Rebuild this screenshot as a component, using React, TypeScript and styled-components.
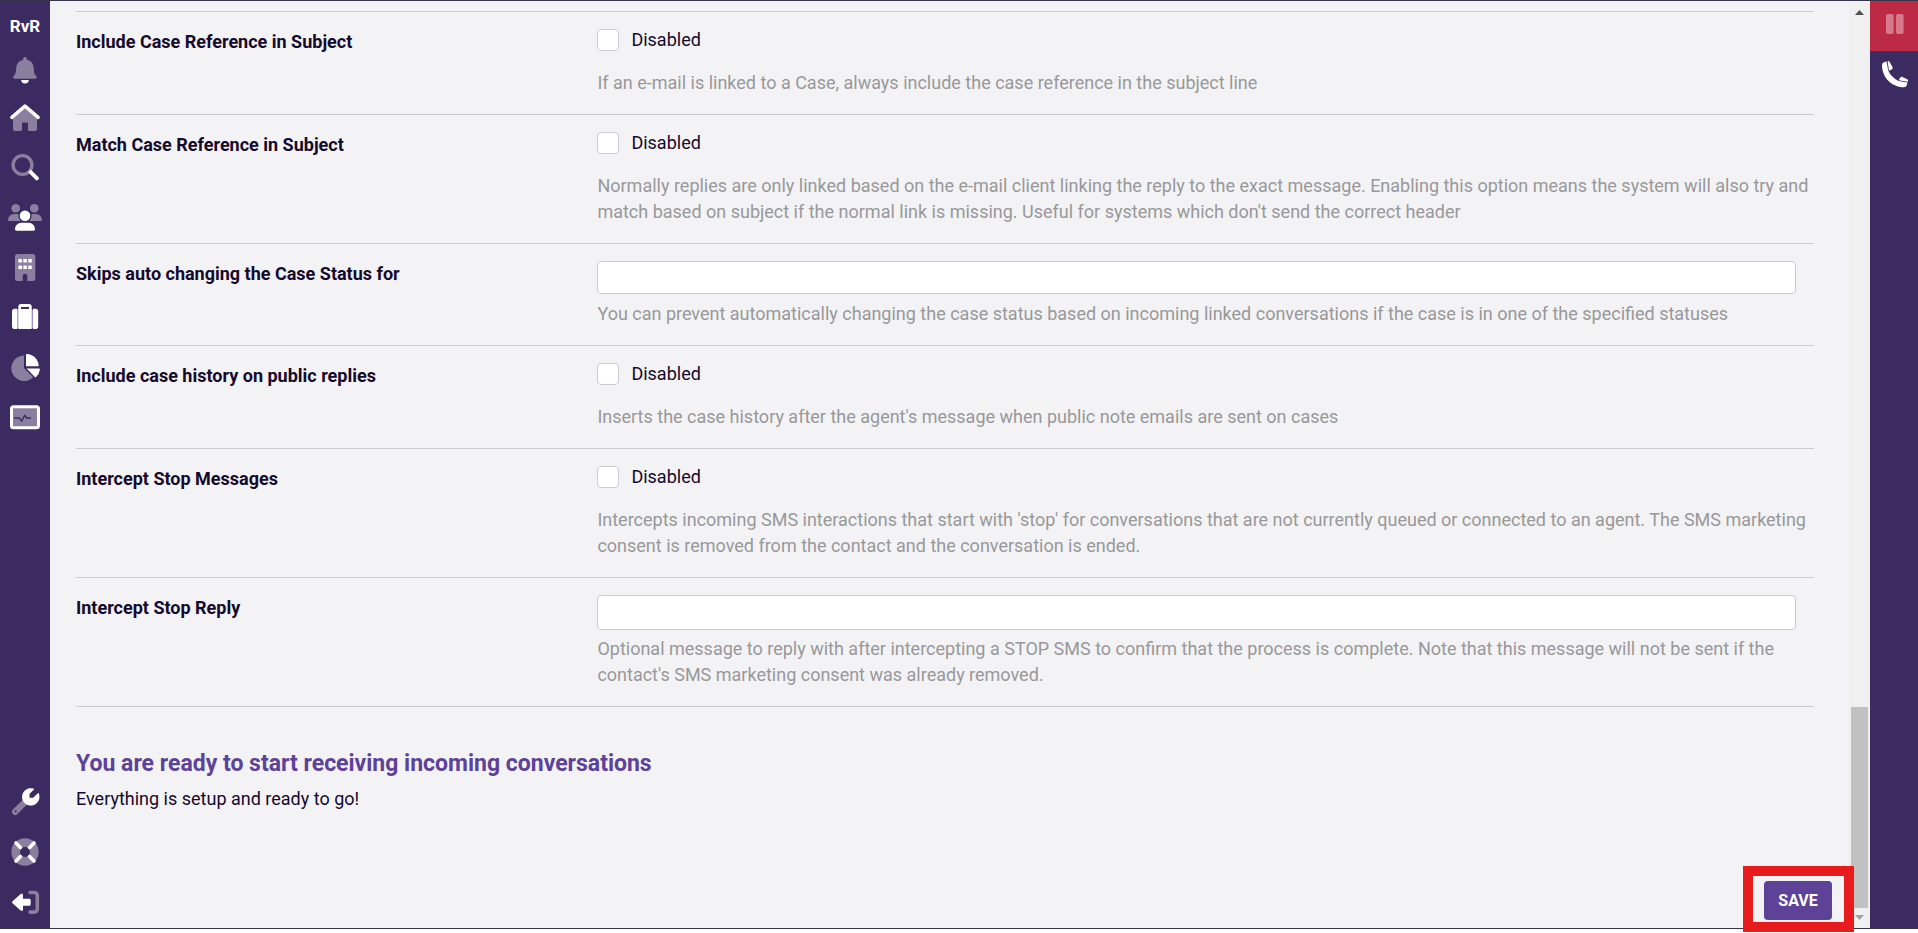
import React from "react";
import styled, { createGlobalStyle } from "styled-components";

const color = {
  nav: "#3b2b60",
  navMuted: "#8b7f9f",
  page: "#f3f3f5",
  line: "#cbccd0",
  ink: "#160a2c",
  hint: "#98989a",
  accent: "#5d4298",
  frame: "#36344a",
  danger: "#bc2a45",
  highlight: "#e81c1c",
};

const GlobalStyle = createGlobalStyle`
  *, *::before, *::after { box-sizing: border-box; }
  body {
    margin: 0;
    background: #ffffff;
    color: ${color.ink};
    font-family: Roboto, "Liberation Sans", sans-serif;
    font-size: 18px;
    line-height: 26px;
  }
`;

const Page = styled.div`
  position: relative;
  min-height: 100vh;
  padding-bottom: 4px;
  display: flex;
`;

const Frame = styled.div`
  flex: 1;
  min-width: 0;
  display: flex;
  border-top: 1px solid ${color.frame};
  border-bottom: 1px solid ${color.frame};
`;

const Sidebar = styled.nav`
  flex: 0 0 50px;
  display: flex;
  flex-direction: column;
  padding-bottom: 1px;
  background: ${color.nav};
`;

const Brand = styled.a`
  display: flex;
  align-items: center;
  justify-content: center;
  height: 45px;
  padding-top: 4px;
  color: #ffffff;
  font-size: 17px;
  font-weight: 700;
  text-decoration: none;
`;

const IconButton = styled.button<{ $short?: boolean; $alert?: boolean }>`
  display: flex;
  align-items: center;
  justify-content: center;
  width: 100%;
  height: ${(p) => (p.$short ? 46 : 50)}px;
  padding: 0;
  border: 0;
  background: ${(p) => (p.$alert ? color.danger : "transparent")};
  cursor: pointer;
`;

const Spacer = styled.div`
  flex: 1;
`;

const Main = styled.main`
  flex: 1;
  min-width: 0;
  padding: 10px 35px 64px 26px;
  background: ${color.page};
`;

const Row = styled.div`
  display: grid;
  grid-template-columns: 30% 70%;
  padding: 17px 0 18px;
  border-top: 1px solid ${color.line};
`;

const RowLabel = styled.label`
  font-weight: 700;
`;

const Field = styled.div`
  min-width: 0;
`;

const CheckLabel = styled.label`
  display: flex;
  align-items: center;
  gap: 12px;
  height: 22px;
  margin-bottom: 19px;
`;

const Checkbox = styled.input`
  appearance: none;
  width: 22px;
  height: 22px;
  margin: 0;
  border: 1px solid ${color.line};
  border-radius: 4px;
  background: #ffffff;
  &:checked {
    background: ${color.accent};
  }
`;

const InputWrap = styled.div`
  padding-right: 18px;
`;

const TextInput = styled.input<{ $compact?: boolean }>`
  display: block;
  width: 100%;
  height: ${(p) => (p.$compact ? 33 : 35)}px;
  margin: 0 0 ${(p) => (p.$compact ? 7 : 6)}px;
  padding: 0 10px;
  border: 1px solid ${color.line};
  border-radius: 4px;
  background: #ffffff;
  font: inherit;
`;

const Hint = styled.p`
  margin: 0;
  color: ${color.hint};
`;

const Closing = styled.section`
  border-top: 1px solid ${color.line};
  padding-top: 41px;
`;

const ClosingTitle = styled.h2`
  margin: 0 0 6px;
  color: ${color.accent};
  font-size: 23px;
  line-height: 32px;
  font-weight: 700;
`;

const ClosingText = styled.p`
  margin: 0;
`;

const Scrollbar = styled.div`
  flex: 0 0 21px;
  display: flex;
  flex-direction: column;
  align-items: center;
  background: #f0f0f0;
`;

const ScrollArrow = styled.svg`
  width: 17px;
  height: 20px;
`;

const ScrollThumb = styled.div`
  width: 17px;
  height: 201px;
  background: #c1c1c1;
`;

const CallPanel = styled.aside`
  flex: 0 0 48px;
  background: ${color.nav};
`;

const SaveHighlight = styled.div`
  position: absolute;
  right: 64px;
  bottom: 1px;
  padding: 5px 12px 2px 11px;
  border: 10px solid ${color.highlight};
  background: ${color.page};
`;

const SaveButton = styled.button`
  display: block;
  width: 68px;
  height: 39px;
  padding: 0;
  border: 0;
  border-radius: 4px;
  background: ${color.accent};
  color: #ffffff;
  font: 700 16px/39px Roboto, "Liberation Sans", sans-serif;
  cursor: pointer;
`;

const M = color.navMuted;
const W = "#ffffff";

const icons: Record<string, React.ReactNode> = {
  bell: (
    <g transform="translate(0 1)">
      <path fill={M} d="M17 4c1 0 1.8.8 1.8 1.8v1c4.5.9 7 4.3 7 9 0 4.5 1.2 5.7 2.6 7.4.9 1.1.2 2.6-1.3 2.6H6.9c-1.5 0-2.2-1.5-1.3-2.6 1.4-1.7 2.6-2.9 2.6-7.4 0-4.7 2.5-8.1 7-9v-1c0-1 .8-1.8 1.8-1.8z" />
      <path fill={W} d="M13.2 27h7.6a3.8 3.4 0 0 1-7.6 0z" />
    </g>
  ),
  home: (
    <>
      <path fill={M} d="M17 8.5l12 10.3V29a2 2 0 0 1-2 2h-5.5a1.5 1.5 0 0 1-1.5-1.5V23.500a1 1 0 0 0-1-1h-4a1 1 0 0 0-1 1v6a1.500 1.500 0 0 1-1.500 1.500H7a2 2 0 0 1-2-2V18.800z" />
      <path fill="none" stroke={W} strokeWidth="3.6" strokeLinecap="round" strokeLinejoin="round" d="M3.900 17.300L17 6.200l13.100 11.100" />
    </>
  ),
  search: (
    <>
      <circle cx="14.500" cy="15" r="9.400" fill="none" stroke={M} strokeWidth="3.400" />
      <path d="M21 21.300l2-1.600 7.300 7.400a1.900 1.900 0 0 1-2.700 2.700l-7-7z" fill={W} />
    </>
  ),
  users: (
    <>
      <g fill={M}>
        <circle cx="7.700" cy="8.300" r="4.300" />
        <circle cx="26.300" cy="8.300" r="4.300" />
        <path d="M0 20a6 6 0 0 1 6-6h3.500q1.500 0 2 .6-1.200 3.600 1.800 6.400H1a1 1 0 0 1-1-1z" />
        <path d="M34 20a6 6 0 0 0-6-6h-3.500q-1.500 0-2 .6 1.200 3.600-1.800 6.400H33a1 1 0 0 0 1-1z" />
      </g>
      <circle cx="17" cy="15.700" r="6" fill={W} stroke={color.nav} strokeWidth="1.400" />
      <path fill={W} d="M7 29.300c0-3.800 2.800-6.600 6.600-6.600h6.800c3.800 0 6.600 2.800 6.600 6.600 0 .8-.6 1.400-1.400 1.400H8.400c-.8 0-1.400-.6-1.400-1.400z" />
    </>
  ),
  building: (
    <>
      <path fill={M} d="M9.500 4h15.300a2.500 2.500 0 0 1 2.500 2.500v22a2.500 2.500 0 0 1-2.500 2.500h-5.500v-5a2.300 2.300 0 0 0-4.600 0v5H9.500A2.500 2.500 0 0 1 7 28.500v-22A2.500 2.500 0 0 1 9.500 4z" />
      <g fill={W}>
        {[9, 15.4].map((y) =>
          [10.4, 15.3, 20.2].map((x) => (
            <rect key={`${x}-${y}`} x={x} y={y} width="3.600" height="3.600" rx=".5" />
          ))
        )}
      </g>
    </>
  ),
  suitcase: (
    <>
      <path fill="#8f83c4" d="M8 10h18v18H8z" />
      <g fill={W}>
        <path d="M9.300 8.700v20.300H6.800A2.800 2.800 0 0 1 4 26.200V11.500a2.800 2.800 0 0 1 2.800-2.800z" />
        <path d="M24.900 8.700h2.500a2.800 2.800 0 0 1 2.800 2.800v14.700a2.800 2.800 0 0 1-2.800 2.800h-2.500z" />
        <path d="M10.300 9h13.400V29H10.300z" />
      </g>
      <path fill={color.nav} d="M12 6h10v3.200H12z" />
      <path fill={W} fillRule="evenodd" d="M10.300 6.800A2.800 2.800 0 0 1 13.100 4h7.800a2.800 2.800 0 0 1 2.800 2.800V10H10.300zM13 7v2h8V7z" />
    </>
  ),
  pie: (
    <>
      <path fill={M} d="M16 5.400V18l9.100 9.300A12.800 12.800 0 1 1 16 5.400z" />
      <path fill={W} d="M18 4.800q0-.8.800-.8A12.400 12.400 0 0 1 30.700 15.500q0 .8-.8.800H18z" />
      <path fill={W} d="M18.600 18.600H31q1 0 .9.900a12.700 12.700 0 0 1-3.800 7.600q-.6.600-1.200 0z" />
    </>
  ),
  monitor: (
    <>
      <rect x="3.500" y="6.700" width="27" height="21" rx="2" fill={M} stroke={W} strokeWidth="3" />
      <path fill="none" stroke={color.nav} strokeWidth="1.400" strokeLinejoin="round" d="M6 18h5.400l2.300 3.200 3-6 2 2.800H23" />
    </>
  ),
  wrench: (
    <>
      <path fill="none" stroke={M} strokeWidth="6.400" strokeLinecap="round" d="M7.200 26.800l9.600-9.600" />
      <circle cx="7.700" cy="26.300" r="1.100" fill={color.nav} />
      <path fill={W} d="M25.900 4.600L21.500 9v3.700h3.700l4.600-4.500c.4-.4.900-.2 1 .3a8.700 8.700 0 1 1-5.400-4.900c.6.200.8.700.5 1z" />
    </>
  ),
  help: (
    <>
      <circle cx="17" cy="17" r="9.300" fill="none" stroke={M} strokeWidth="8.700" />
      <path fill="none" stroke={W} strokeWidth="3.600" strokeLinecap="round" d="M8 8l4.400 4.400M26 8l-4.400 4.400M8 26l4.400-4.400M26 26l-4.400-4.400" />
    </>
  ),
  logout: (
    <>
      <path fill="none" stroke={M} strokeWidth="3.600" strokeLinecap="round" d="M22 7.500h4.300a3 3 0 0 1 3 3v13.600a3 3 0 0 1-3 3H22" />
      <path fill={W} d="M4.500 16.300l8.200-7.200c1-.9 2.300-.3 2.300.9v3.800h6.200c.8 0 1.500.7 1.500 1.500v4c0 .8-.7 1.500-1.500 1.500H15v3.800c0 1.200-1.300 1.800-2.300.9l-8.200-7.200a1.300 1.300 0 0 1 0-2z" />
    </>
  ),
  pause: (
    <g fill="#d8798b">
      <rect x="9" y="5" width="7.600" height="20" rx="2" />
      <rect x="19" y="5" width="7.600" height="20" rx="2" />
    </g>
  ),
  phone: (
    <g fill={W} transform="translate(1 0)">
      <path d="M4 8q0-2 2-2.700l2.600-.9L10.200 13.500Q13 20 20.500 24l9 1.500-.8 3q-.5 1.800-2.700 1.800C13 30 4 20 4 8z" />
      <path d="M9.600 4.200q1.400-.4 2 .8l3 5.200q.6 1.200-.6 2l-3 1.600z" />
      <path d="M20.700 23.300l1.500-2.500q.8-1.300 2.100-.8l5 2.300q1.100.7.700 2.500z" />
    </g>
  ),
};

const Icon = ({ name }: { name: string }) => (
  <svg width="34" height="34" viewBox="0 0 34 34" aria-hidden="true">
    {icons[name]}
  </svg>
);

const topNav = [
  ["home", "Home"],
  ["search", "Search"],
  ["users", "Contacts"],
  ["building", "Organisations"],
  ["suitcase", "Cases"],
  ["pie", "Reports"],
  ["monitor", "Monitoring"],
];

const bottomNav = [
  ["wrench", "Settings"],
  ["help", "Help"],
  ["logout", "Log out"],
];

type Setting = {
  id: string;
  label: string;
  kind: "check" | "text" | "tags";
  hint: string;
};

const settings: Setting[] = [
  {
    id: "include-reference",
    label: "Include Case Reference in Subject",
    kind: "check",
    hint: "If an e-mail is linked to a Case, always include the case reference in the subject line",
  },
  {
    id: "match-reference",
    label: "Match Case Reference in Subject",
    kind: "check",
    hint: "Normally replies are only linked based on the e-mail client linking the reply to the exact message. Enabling this option means the system will also try and match based on subject if the normal link is missing. Useful for systems which don't send the correct header",
  },
  {
    id: "skip-status",
    label: "Skips auto changing the Case Status for",
    kind: "tags",
    hint: "You can prevent automatically changing the case status based on incoming linked conversations if the case is in one of the specified statuses",
  },
  {
    id: "include-history",
    label: "Include case history on public replies",
    kind: "check",
    hint: "Inserts the case history after the agent's message when public note emails are sent on cases",
  },
  {
    id: "intercept-stop",
    label: "Intercept Stop Messages",
    kind: "check",
    hint: "Intercepts incoming SMS interactions that start with 'stop' for conversations that are not currently queued or connected to an agent. The SMS marketing consent is removed from the contact and the conversation is ended.",
  },
  {
    id: "stop-reply",
    label: "Intercept Stop Reply",
    kind: "text",
    hint: "Optional message to reply with after intercepting a STOP SMS to confirm that the process is complete. Note that this message will not be sent if the contact's SMS marketing consent was already removed.",
  },
];

const SettingRow = ({ id, label, kind, hint }: Setting) => (
  <Row>
    <RowLabel htmlFor={id}>{label}</RowLabel>
    <Field>
      {kind === "check" ? (
        <CheckLabel>
          <Checkbox type="checkbox" id={id} />
          Disabled
        </CheckLabel>
      ) : (
        <InputWrap>
          <TextInput type="text" id={id} $compact={kind === "tags"} />
        </InputWrap>
      )}
      <Hint>{hint}</Hint>
    </Field>
  </Row>
);

export default function App() {
  return (
    <Page>
      <GlobalStyle />
      <Frame>
        <Sidebar>
          <Brand href="#">RvR</Brand>
          <IconButton $short type="button" aria-label="Notifications">
            <Icon name="bell" />
          </IconButton>
          {topNav.map(([name, label]) => (
            <IconButton key={name} type="button" aria-label={label}>
              <Icon name={name} />
            </IconButton>
          ))}
          <Spacer />
          {bottomNav.map(([name, label]) => (
            <IconButton key={name} type="button" aria-label={label}>
              <Icon name={name} />
            </IconButton>
          ))}
        </Sidebar>
        <Main>
          <form id="conversation-settings">
            {settings.map((s) => (
              <SettingRow key={s.id} {...s} />
            ))}
          </form>
          <Closing>
            <ClosingTitle>You are ready to start receiving incoming conversations</ClosingTitle>
            <ClosingText>Everything is setup and ready to go!</ClosingText>
          </Closing>
        </Main>
        <Scrollbar aria-hidden="true">
          <ScrollArrow viewBox="0 0 17 20">
            <path d="M4 14h9l-4.500-5z" fill="#505050" />
          </ScrollArrow>
          <Spacer />
          <ScrollThumb />
          <ScrollArrow viewBox="0 0 17 20">
            <path d="M4 7h9l-4.500 5z" fill="#a3a3a3" />
          </ScrollArrow>
        </Scrollbar>
        <CallPanel>
          <IconButton $alert type="button" aria-label="Pause">
            <Icon name="pause" />
          </IconButton>
          <IconButton $short type="button" aria-label="Phone">
            <Icon name="phone" />
          </IconButton>
        </CallPanel>
      </Frame>
      <SaveHighlight>
        <SaveButton type="submit" form="conversation-settings">
          SAVE
        </SaveButton>
      </SaveHighlight>
    </Page>
  );
}
